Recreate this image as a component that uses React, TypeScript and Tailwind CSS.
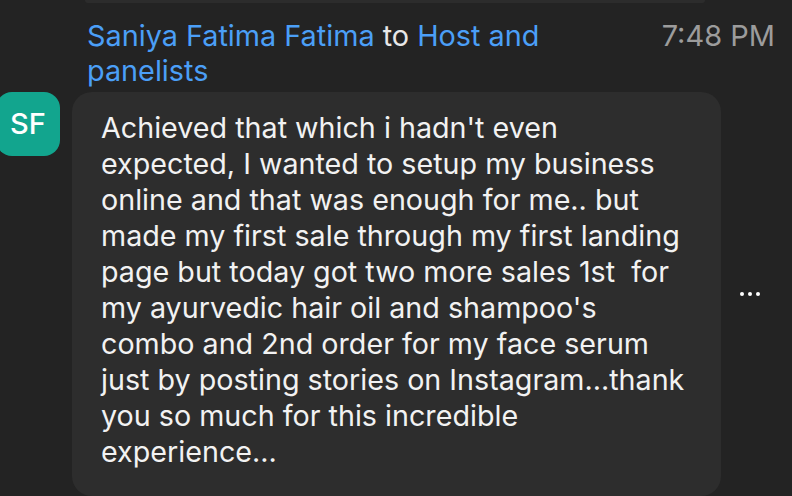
const lines = [
  "Achieved that which i hadn't even",
  'expected, I wanted to setup my business',
  'online and that was enough for me.. but',
  'made my first sale through my first landing',
  'page but today got two more sales 1st  for',
  "my ayurvedic hair oil and shampoo's",
  'combo and 2nd order for my face serum',
  'just by posting stories on Instagram...thank',
  'you so much for this incredible',
  'experience...',
];

export default function App() {
  return (
    <div className="h-[496px] w-[792px] overflow-hidden bg-[#232323] font-['Inter',sans-serif]">
      <div className="ml-[85px] h-[3px] w-[620px] rounded-b-[16px] bg-[#2c2c2c]" />
      <div className="mt-[15px] flex items-start justify-between pl-[87px] pr-[17px]">
        <div className="w-[480px] text-[28.8px] leading-[35px] text-[#4b9ff7]">
          Saniya Fatima Fatima <span className="text-[#e8e8e8]">to</span> Host and panelists
        </div>
        <div className="text-[29px] leading-[35px] text-[#9c9c9c]">7:48 PM</div>
      </div>
      <div className="mt-[4px] flex items-start">
        <div className="-ml-[4px] flex h-[64px] w-[64px] shrink-0 items-center justify-center rounded-[16px] bg-[#12a58e] text-[29px] font-medium text-white">
          SF
        </div>
        <div className="ml-[12px] w-[649px] rounded-[20px] bg-[#2d2d2d] pb-[26px] pl-[29px] pt-[18px]">
          <div className="whitespace-pre text-[28.7px] leading-[36px] text-[#f2f2f2]">
            {lines.map((l) => (
              <div key={l}>{l}</div>
            ))}
          </div>
        </div>
        <div className="flex flex-1 items-center justify-center gap-[4px] self-center pr-[14px]">
          <span className="h-[4px] w-[4px] rounded-full bg-white" />
          <span className="h-[4px] w-[4px] rounded-full bg-white" />
          <span className="h-[4px] w-[4px] rounded-full bg-white" />
        </div>
      </div>
    </div>
  );
}
